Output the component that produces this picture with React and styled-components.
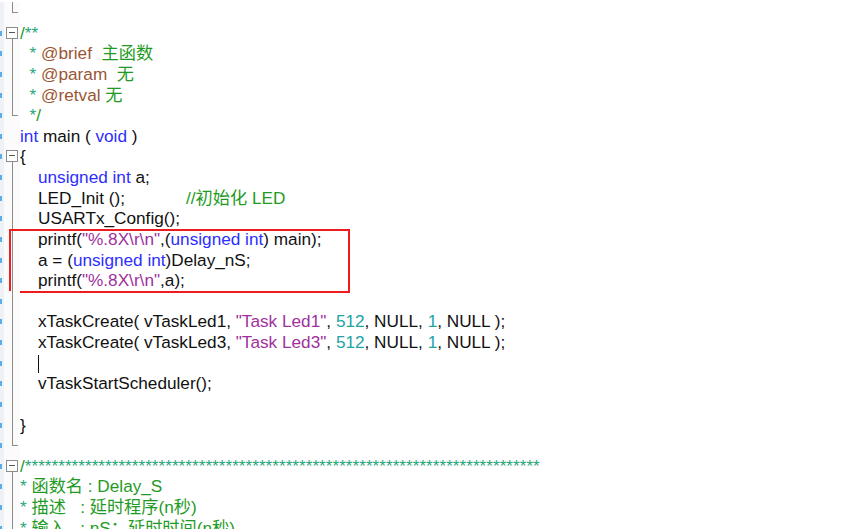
import React from "react";
import styled, { createGlobalStyle } from "styled-components";

const GlobalStyle = createGlobalStyle`
  html, body {
    margin: 0;
    padding: 0;
    background: #ffffff;
    overflow: hidden;
  }
`;

const LINE_H = 20.625;

const Editor = styled.div`
  width: 865px;
  height: 529px;
  box-sizing: border-box;
  padding-top: 2px;
  overflow: hidden;
  background: #ffffff;
  font-family: "Liberation Sans", "Noto Sans CJK SC", sans-serif;
  font-size: 17.2px;
  color: #111111;
`;

const Line = styled.div`
  display: grid;
  grid-template-columns: 4px 16px 1fr;
  height: ${LINE_H}px;
  line-height: ${LINE_H}px;
`;

const Strip = styled.div`
  background: #eef1f5;
  position: relative;
  &::after {
    content: "";
    display: ${(p) => (p.$dash ? "block" : "none")};
    position: absolute;
    left: 0;
    top: 8px;
    width: 2px;
    height: 5px;
    background: #58aee6;
  }
`;

const Fold = styled.div`
  position: relative;
  background: #fbfbfb;
  &::before {
    content: "";
    position: absolute;
    left: 8px;
    width: 1px;
    background: #8c8c8c;
    display: ${(p) => (p.$kind === "none" ? "none" : "block")};
    top: ${(p) => (p.$kind === "box" ? "16px" : "0")};
    height: ${(p) =>
      p.$kind === "end" ? "11px" : p.$kind === "box" ? "6px" : "100%"};
  }
  &::after {
    content: "";
    position: absolute;
    display: ${(p) => (p.$kind === "end" ? "block" : "none")};
    left: 8px;
    top: 10px;
    width: 6px;
    height: 1px;
    background: #8c8c8c;
  }
`;

const FoldBox = styled.span`
  position: absolute;
  left: 2px;
  top: 4px;
  width: 12px;
  height: 12px;
  box-sizing: border-box;
  border: 1px solid #8c8c8c;
  background: #ffffff;
  &::after {
    content: "";
    position: absolute;
    left: 2px;
    top: 4px;
    width: 6px;
    height: 1px;
    background: #555555;
  }
`;

const Code = styled.div`
  white-space: pre;
  padding-left: ${(p) => (p.$indent ? 18 : 0)}px;
`;

const Kw = styled.span`
  color: #2d2dff;
`;
const Cm = styled.span`
  color: #1f9b25;
`;
const Tag = styled.span`
  color: #9a5634;
`;
const Str = styled.span`
  color: #a0309c;
`;
const Num = styled.span`
  color: #22a3a6;
`;
const Star = styled.span`
  color: #2aa57a;
`;

const Stop = styled.span`
  display: inline-block;
  width: ${(p) => p.$w}px;
`;

const Cursor = styled.span`
  display: inline-block;
  width: 1px;
  height: 18px;
  background: #111111;
  vertical-align: middle;
`;

const Marked = styled.div`
  position: relative;
  &::after {
    content: "";
    position: absolute;
    left: 9px;
    width: 341px;
    top: 0;
    bottom: -2px;
    box-sizing: border-box;
    border: 2px solid #ee1c1c;
    pointer-events: none;
  }
`;

function Row({ fold = "line", dash = false, indent = false, children }) {
  return (
    <Line>
      <Strip $dash={dash} />
      <Fold $kind={fold}>{fold === "box" && <FoldBox />}</Fold>
      <Code $indent={indent}>{children}</Code>
    </Line>
  );
}

const stars = "*".repeat(77);

export default function App() {
  return (
    <>
      <GlobalStyle />
      <Editor>
        <Row fold="end" />
        <Row fold="box" dash>
          <Cm>/</Cm>
          <Star>**</Star>
        </Row>
        <Row dash>
          {"  "}
          <Star>*</Star> <Tag>@brief</Tag>
          {"  "}
          <Cm>主函数</Cm>
        </Row>
        <Row dash>
          {"  "}
          <Star>*</Star> <Tag>@param</Tag>
          {"  "}
          <Cm>无</Cm>
        </Row>
        <Row dash>
          {"  "}
          <Star>*</Star> <Tag>@retval</Tag> <Cm>无</Cm>
        </Row>
        <Row fold="end" dash>
          {"  "}
          <Star>*</Star>
          <Cm>/</Cm>
        </Row>
        <Row fold="none" dash>
          <Kw>int</Kw> main ( <Kw>void</Kw> )
        </Row>
        <Row fold="box" dash>
          {"{"}
        </Row>
        <Row indent dash>
          <Kw>unsigned int</Kw> a;
        </Row>
        <Row indent dash>
          <Stop $w={148}>LED_Init ();</Stop>
          <Cm>//初始化 LED</Cm>
        </Row>
        <Row indent dash>
          USARTx_Config();
        </Row>
        <Marked>
          <Row indent dash>
            printf(<Str>"%.8X\r\n"</Str>,(<Kw>unsigned int</Kw>) main);
          </Row>
          <Row indent dash>
            a = (<Kw>unsigned int</Kw>)Delay_nS;
          </Row>
          <Row indent dash>
            printf(<Str>"%.8X\r\n"</Str>,a);
          </Row>
        </Marked>
        <Row dash />
        <Row indent dash>
          xTaskCreate( vTaskLed1, <Str>"Task Led1"</Str>, <Num>512</Num>, NULL,{" "}
          <Num>1</Num>, NULL );
        </Row>
        <Row indent dash>
          xTaskCreate( vTaskLed3, <Str>"Task Led3"</Str>, <Num>512</Num>, NULL,{" "}
          <Num>1</Num>, NULL );
        </Row>
        <Row indent dash>
          <Cursor />
        </Row>
        <Row indent dash>
          vTaskStartScheduler();
        </Row>
        <Row dash />
        <Row dash>{"}"}</Row>
        <Row fold="end" dash />
        <Row fold="box" dash>
          <Cm>/</Cm>
          <Star>{stars}</Star>
        </Row>
        <Row dash>
          <Star>*</Star> <Cm>函数名 : Delay_S</Cm>
        </Row>
        <Row dash>
          <Star>*</Star> <Cm>描述   : 延时程序(n秒)</Cm>
        </Row>
        <Row dash>
          <Star>*</Star> <Cm>输入   : nS：延时时间(n秒)</Cm>
        </Row>
      </Editor>
    </>
  );
}
